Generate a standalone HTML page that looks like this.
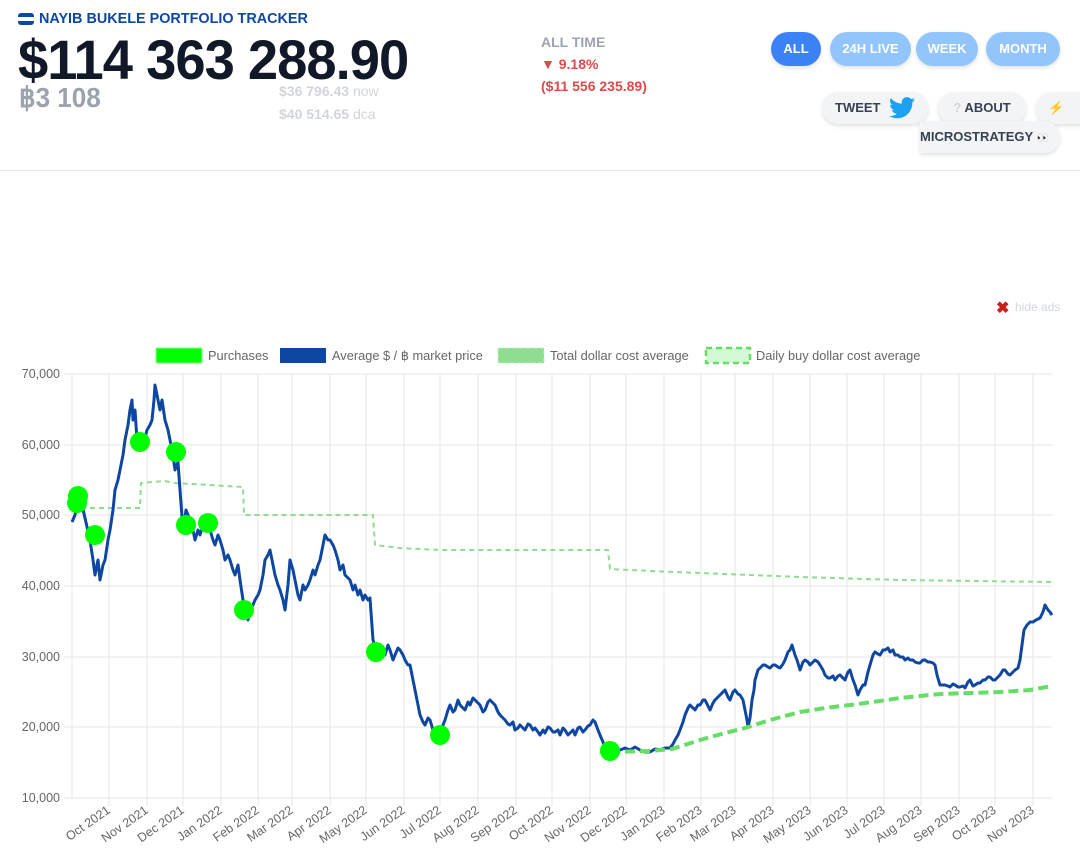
<!DOCTYPE html>
<html><head><meta charset="utf-8"><style>
body{margin:0;width:1080px;height:859px;background:#fff;font-family:"Liberation Sans",sans-serif;position:relative;overflow:hidden}
.a{position:absolute;white-space:nowrap}
.pill{position:absolute;border-radius:18px;font-weight:bold;font-size:13px;text-align:center;box-shadow:0 2px 4px rgba(0,0,0,.12)}
.b1{background:#93c5fd;color:#fff;height:34px;line-height:34px;top:32px}
.g{background:#f3f4f6;color:#374151;height:32px;line-height:32px}
</style></head><body>
<div class="a" style="left:18px;top:13px;width:16px;height:12px;border-radius:3px;overflow:hidden;background:#fff">
<div style="height:4px;background:#0d47a1"></div><div style="height:4px;background:#fff"></div><div style="height:4px;background:#0d47a1"></div></div>
<div class="a" style="left:39px;top:11px;font-size:14.4px;font-weight:bold;color:#0d47a1">NAYIB BUKELE PORTFOLIO TRACKER</div>
<div class="a" style="left:18px;top:27px;font-size:56px;font-weight:bold;color:#111827;transform:scaleX(0.97);transform-origin:0 0;letter-spacing:-1px">$114 363 288.90</div>
<div class="a" style="left:19px;top:81px;font-size:28px;font-weight:bold;color:#9ca3af;transform:scaleX(0.93);transform-origin:0 0">฿3 108</div>
<div class="a" style="left:279px;top:83px;font-size:14px;color:#d1d5db"><b>$36 796.43</b> now</div>
<div class="a" style="left:279px;top:106px;font-size:14px;color:#d1d5db"><b>$40 514.65</b> dca</div>
<div class="a" style="left:541px;top:34px;font-size:14px;font-weight:bold;color:#9ca3af">ALL TIME</div>
<div class="a" style="left:541px;top:56px;font-size:14px;font-weight:bold;color:#dc4a4a">▼ 9.18%</div>
<div class="a" style="left:541px;top:78px;font-size:14px;font-weight:bold;color:#dc4a4a">($11 556 235.89)</div>

<div class="pill b1" style="left:771px;width:50px;background:#3b82f6">ALL</div>
<div class="pill b1" style="left:830px;width:81px">24H LIVE</div>
<div class="pill b1" style="left:916px;width:62px">WEEK</div>
<div class="pill b1" style="left:986px;width:74px">MONTH</div>
<div class="pill g" style="left:822px;top:92px;width:106px;text-align:left;text-indent:13px">TWEET
<svg style="position:absolute;left:67px;top:5px" width="26" height="22" viewBox="0 0 24 20"><path fill="#1da1f2" d="M24 2.4c-.9.4-1.8.7-2.8.8 1-.6 1.8-1.600 2.2-2.7-1 .6-2 1-3.1 1.2C19.3.7 18 0 16.6 0c-2.7 0-4.9 2.2-4.9 4.9 0 .4 0 .8.1 1.1C7.7 5.8 4.1 3.9 1.7.9c-.4.7-.7 1.6-.7 2.5 0 1.7.9 3.2 2.2 4.1-.8 0-1.6-.2-2.2-.6v.1c0 2.4 1.7 4.4 3.900 4.8-.4.1-.8.2-1.3.2-.3 0-.6 0-.9-.1.6 2 2.4 3.4 4.6 3.4-1.700 1.300-3.800 2.100-6.100 2.100-.4 0-.8 0-1.2-.1 2.2 1.4 4.8 2.2 7.5 2.2 9.1 0 14-7.5 14-14v-.6c1-.7 1.8-1.6 2.5-2.5z"/></svg></div>
<div class="pill g" style="left:938px;top:92px;width:88px"><span style="color:#d1d5db">?</span> ABOUT</div>
<div class="pill g" style="left:1036px;top:92px;width:60px;text-align:left;text-indent:12px;color:#facc15">⚡</div>
<div class="pill g" style="left:920px;top:121px;width:140px;border-radius:0 16px 16px 0;font-size:13px;text-align:left">MICROSTRATEGY <span style="font-size:10px">👀</span></div>
<div class="a" style="left:0;top:170px;width:1080px;height:1px;background:#e5e7eb"></div>

<div class="a" style="left:996px;top:298px;font-size:16px;font-weight:bold;color:#c81e1e">✖</div>
<div class="a" style="left:1015px;top:300px;font-size:12px;color:#d1d5db">hide ads</div>

<svg class="a" style="left:0;top:0" width="1080" height="859">
<g font-family="Liberation Sans,sans-serif" font-size="12.8" fill="#666">
<rect x="156" y="348" width="46" height="15" fill="#00ff00" stroke="#8f8" />
<text x="208" y="360">Purchases</text>
<rect x="280" y="348" width="46" height="15" fill="#0d47a1"/>
<text x="332" y="360">Average $ / ฿ market price</text>
<rect x="498" y="348" width="46" height="15" fill="#90dc90" stroke="#c6f0c6" stroke-dasharray="4 3"/>
<text x="550" y="360">Total dollar cost average</text>
<rect x="706" y="348" width="44" height="15" fill="#d3fbd3" stroke="#66dd66" stroke-width="2.5" stroke-dasharray="6 4"/>
<text x="756" y="360">Daily buy dollar cost average</text>
<g text-anchor="end" font-size="12.5">
<text x="60" y="378">70,000</text><text x="60" y="449">60,000</text><text x="60" y="519">50,000</text><text x="60" y="590">40,000</text><text x="60" y="661">30,000</text><text x="60" y="731">20,000</text><text x="60" y="802">10,000</text>
</g>
<g stroke="#e5e5e5" stroke-width="1">
<line x1="64" y1="374" x2="1052" y2="374"/><line x1="64" y1="445" x2="1052" y2="445"/><line x1="64" y1="515" x2="1052" y2="515"/><line x1="64" y1="586" x2="1052" y2="586"/><line x1="64" y1="657" x2="1052" y2="657"/><line x1="64" y1="727" x2="1052" y2="727"/><line x1="64" y1="798" x2="1052" y2="798"/>
<line x1="72" y1="374" x2="72" y2="798"/>
<line x1="109" y1="374" x2="109" y2="806"/><line x1="147" y1="374" x2="147" y2="806"/><line x1="183" y1="374" x2="183" y2="806"/><line x1="221" y1="374" x2="221" y2="806"/><line x1="258" y1="374" x2="258" y2="806"/><line x1="292" y1="374" x2="292" y2="806"/><line x1="330" y1="374" x2="330" y2="806"/><line x1="366" y1="374" x2="366" y2="806"/><line x1="404" y1="374" x2="404" y2="806"/><line x1="440" y1="374" x2="440" y2="806"/><line x1="478" y1="374" x2="478" y2="806"/><line x1="516" y1="374" x2="516" y2="806"/><line x1="552" y1="374" x2="552" y2="806"/><line x1="590" y1="374" x2="590" y2="806"/><line x1="626" y1="374" x2="626" y2="806"/><line x1="664" y1="374" x2="664" y2="806"/><line x1="701" y1="374" x2="701" y2="806"/><line x1="735" y1="374" x2="735" y2="806"/><line x1="773" y1="374" x2="773" y2="806"/><line x1="810" y1="374" x2="810" y2="806"/><line x1="847" y1="374" x2="847" y2="806"/><line x1="884" y1="374" x2="884" y2="806"/><line x1="921" y1="374" x2="921" y2="806"/><line x1="959" y1="374" x2="959" y2="806"/><line x1="995" y1="374" x2="995" y2="806"/><line x1="1033" y1="374" x2="1033" y2="806"/>
</g>
<g text-anchor="end" font-size="12.5">
<text transform="translate(111,812) rotate(-35)">Oct 2021</text>
<text transform="translate(149,812) rotate(-35)">Nov 2021</text>
<text transform="translate(185,812) rotate(-35)">Dec 2021</text>
<text transform="translate(223,812) rotate(-35)">Jan 2022</text>
<text transform="translate(260,812) rotate(-35)">Feb 2022</text>
<text transform="translate(294,812) rotate(-35)">Mar 2022</text>
<text transform="translate(332,812) rotate(-35)">Apr 2022</text>
<text transform="translate(368,812) rotate(-35)">May 2022</text>
<text transform="translate(406,812) rotate(-35)">Jun 2022</text>
<text transform="translate(442,812) rotate(-35)">Jul 2022</text>
<text transform="translate(480,812) rotate(-35)">Aug 2022</text>
<text transform="translate(518,812) rotate(-35)">Sep 2022</text>
<text transform="translate(554,812) rotate(-35)">Oct 2022</text>
<text transform="translate(592,812) rotate(-35)">Nov 2022</text>
<text transform="translate(628,812) rotate(-35)">Dec 2022</text>
<text transform="translate(666,812) rotate(-35)">Jan 2023</text>
<text transform="translate(703,812) rotate(-35)">Feb 2023</text>
<text transform="translate(737,812) rotate(-35)">Mar 2023</text>
<text transform="translate(775,812) rotate(-35)">Apr 2023</text>
<text transform="translate(812,812) rotate(-35)">May 2023</text>
<text transform="translate(849,812) rotate(-35)">Jun 2023</text>
<text transform="translate(886,812) rotate(-35)">Jul 2023</text>
<text transform="translate(923,812) rotate(-35)">Aug 2023</text>
<text transform="translate(961,812) rotate(-35)">Sep 2023</text>
<text transform="translate(997,812) rotate(-35)">Oct 2023</text>
<text transform="translate(1035,812) rotate(-35)">Nov 2023</text>
</g>
</g>
<polyline fill="none" stroke="#90dc90" stroke-width="2" stroke-dasharray="5 4" points="72,508 140,508 141,483 165,481 175,483 243,487 244,515 373,515 375,545 400,548 440,550 608,550 610,569 650,571 700,573 800,577 900,580 1052,582"/>
<polyline fill="none" stroke="#0d47a1" stroke-width="3" stroke-linejoin="round" points="72,522 75,515 78,498 82,505 85,518 90,540 93,560 95,575 98,560 100,580 103,565 105,560 108,540 110,530 113,510 115,490 118,480 120,470 123,455 125,440 128,425 130,410 132,400 133,420 135,410 137,440 140,435 142,445 145,438 147,430 150,425 152,420 154,400 155,385 157,395 160,410 162,400 165,420 168,430 170,440 173,455 175,470 178,462 180,490 183,530 186,510 188,515 192,525 195,540 198,530 200,535 203,525 205,520 208,515 210,530 213,540 215,545 218,535 220,540 223,550 225,560 228,555 230,560 233,570 235,575 238,565 240,580 243,600 245,612 248,620 250,610 253,605 255,600 258,595 260,590 263,575 265,560 268,555 270,550 273,565 275,575 278,585 280,590 283,600 285,610 288,585 290,560 293,570 295,580 298,595 300,600 303,585 305,590 308,585 310,580 313,570 315,575 318,565 320,560 323,545 325,535 328,540 330,540 333,545 335,550 338,560 340,570 343,565 345,575 348,578 350,580 353,590 355,585 358,595 360,590 363,600 365,595 368,600 370,598 373,640 376,650 378,660 382,650 385,655 388,645 390,650 393,660 395,655 398,648 400,650 403,655 405,660 408,665 410,665 413,680 415,690 418,705 420,715 423,722 425,725 428,718 430,720 433,730 435,735 438,738 440,740 443,725 445,720 448,710 450,705 453,712 455,710 458,700 460,705 463,708 465,710 468,702 470,705 473,698 475,700 478,703 480,705 483,712 485,710 488,702 490,700 493,703 495,705 498,712 500,715 503,718 505,720 508,724 510,725 513,722 515,730 518,728 520,725 523,728 525,730 528,724 530,725 533,730 535,728 538,732 540,735 543,730 545,733 548,727 550,728 553,732 555,732 558,730 560,735 563,728 565,730 568,735 570,733 573,730 575,735 578,728 580,727 583,732 585,730 588,726 590,725 593,720 595,722 598,730 600,735 603,742 605,748 608,752 612,750 620,750 625,748 630,750 635,747 640,750 645,752 650,752 655,749 660,750 665,748 670,748 673,744 675,740 678,735 680,730 683,722 685,715 688,708 690,705 693,708 695,710 698,705 700,705 703,700 705,700 708,706 710,710 713,703 715,700 718,697 720,695 723,692 725,690 728,697 730,700 733,692 735,690 738,694 740,695 743,700 745,710 747,720 748,727 750,718 752,700 754,690 755,680 758,670 760,668 763,665 765,665 768,667 770,668 773,665 775,665 778,667 780,668 783,664 785,660 788,652 790,650 792,645 795,655 797,660 800,670 803,662 805,660 808,662 810,665 813,662 815,660 818,662 820,665 823,670 825,675 828,678 830,678 833,676 835,680 838,676 840,675 843,678 845,680 848,672 850,670 853,680 855,685 858,695 860,690 863,685 865,685 868,672 870,665 873,655 875,652 878,654 880,655 883,650 885,650 888,648 890,652 893,650 895,655 898,655 900,657 903,657 905,660 908,658 910,660 913,660 915,662 918,663 920,663 923,660 925,660 928,662 930,662 933,663 935,665 937,675 940,685 943,685 945,685 948,686 950,687 953,684 955,685 958,687 960,687 963,686 965,688 968,682 970,680 973,686 975,685 978,683 980,683 983,680 985,680 988,677 990,677 993,680 995,680 998,677 1000,675 1003,670 1005,670 1008,674 1010,675 1013,672 1015,670 1018,668 1020,660 1022,645 1024,630 1027,625 1030,622 1033,622 1036,620 1040,618 1043,612 1045,605 1048,610 1050,612 1052,615"/>
<polyline fill="none" stroke="#66dd66" stroke-width="4" stroke-dasharray="10 5" points="610,752 650,751 672,749 700,740 725,733 745,728 770,720 800,712 825,708 850,705 880,701 900,698 940,694 1000,692 1030,690 1052,686"/>
<g fill="#00ff00">
<circle cx="78" cy="496" r="10"/><circle cx="77" cy="503" r="10"/><circle cx="95" cy="535" r="10"/><circle cx="140" cy="442" r="10"/><circle cx="176" cy="452" r="10"/><circle cx="186" cy="525" r="10"/><circle cx="208" cy="523" r="10"/><circle cx="244" cy="610" r="10"/><circle cx="376" cy="652" r="10"/><circle cx="440" cy="735" r="10"/><circle cx="610" cy="751" r="10"/>
</g>
</svg>
</body></html>
